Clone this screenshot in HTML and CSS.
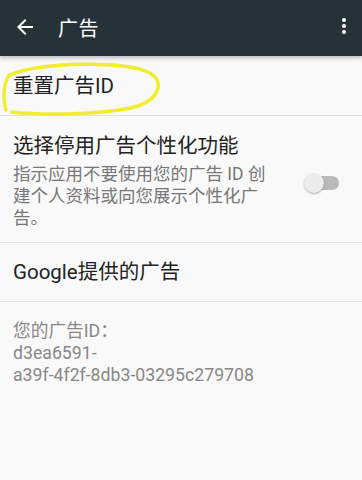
FILE: index.html
```html
<!DOCTYPE html>
<html lang="zh-CN">
<head>
<meta charset="utf-8">
<link rel="stylesheet" href="styles.css">
</head>
<body>
<div class="screen">
  <header class="toolbar">
    <svg class="back" width="24" height="24" viewBox="0 0 24 24"><path d="M20 11H7.83l5.59-5.59L12 4l-8 8 8 8 1.41-1.41L7.83 13H20v-2z" fill="#fff"/></svg>
    <span class="title">广告</span>
    <span class="spacer"></span>
    <svg class="more" width="8" height="20" viewBox="0 0 8 20"><circle cx="4" cy="4" r="2" fill="#fff"/><circle cx="4" cy="10" r="2" fill="#fff"/><circle cx="4" cy="16" r="2" fill="#fff"/></svg>
  </header>
  <main class="list">
    <div class="row row-single reset">
      <span class="row-title">重置广告ID</span>
      <svg class="scribble" width="170" height="62" viewBox="0 0 170 62"><path d="M10 16 C 40 3, 125 1, 150 14 C 164 23, 160 39, 138 47 C 110 55, 50 57, 12 53 M 9 16 C 3 27, 3 40, 6 51" fill="none" stroke="#f2ee2e" stroke-width="3.5" stroke-linecap="round"/></svg>
    </div>
    <div class="row row-switch">
      <div class="row-text">
        <div class="row-title">选择停用广告个性化功能</div>
        <div class="row-sub">指示应用不要使用您的广告 ID 创<br>建个人资料或向您展示个性化广<br>告。</div>
      </div>
      <div class="switch"><span class="track"></span><span class="thumb"></span></div>
    </div>
    <div class="row row-single">
      <span class="row-title">Google提供的广告</span>
    </div>
    <div class="info">您的广告ID：<br>d3ea6591-<br>a39f-4f2f-8db3-03295c279708</div>
  </main>
</div>
</body>
</html>
```
FILE: styles.css
```css
html, body {
  margin: 0;
  padding: 0;
}
body {
  background: #f9f9f9;
  font-family: Roboto, "Noto Sans CJK SC", sans-serif;
  width: 362px;
  height: 480px;
  overflow: hidden;
}
.screen {
  display: flex;
  flex-direction: column;
}
.toolbar {
  height: 56px;
  background: #263238;
  display: flex;
  align-items: center;
  padding: 0 12px 0 13px;
  box-shadow: 0 2px 4px rgba(0,0,0,0.25);
  position: relative;
  z-index: 1;
}
.back {
  margin-top: -2px;
}
.title {
  color: #fff;
  font-size: 20px;
  margin-left: 21px;
  margin-top: -2px;
  letter-spacing: 0.5px;
}
.spacer {
  flex: 1;
}
.more {
  margin-top: -4px;
  margin-right: 2px;
}
.list {
  display: flex;
  flex-direction: column;
}
.row {
  border-bottom: 1px solid #e2e2e2;
  padding: 0 13px;
}
.row-single {
  height: 58px;
  display: flex;
  align-items: center;
}
.reset {
  position: relative;
  height: 59px;
}
.row-title {
  font-size: 20.5px;
  color: #222;
  line-height: 28px;
}
.scribble {
  position: absolute;
  left: 0;
  top: 3px;
}
.row-switch {
  display: flex;
  align-items: center;
  padding-top: 16px;
  padding-bottom: 13px;
}
.row-text {
  flex: 1;
}
.row-sub {
  font-size: 17.5px;
  color: #777;
  line-height: 22px;
  margin-top: 3px;
}
.switch {
  position: relative;
  width: 36px;
  height: 24px;
  margin-right: 9px;
  margin-top: 4px;
}
.track {
  position: absolute;
  left: 4px;
  right: 1px;
  top: 5px;
  height: 14px;
  border-radius: 7px;
  background: #b9b9b9;
}
.thumb {
  position: absolute;
  left: 0;
  top: 2px;
  width: 20px;
  height: 20px;
  border-radius: 50%;
  background: #ececec;
  box-shadow: 0 1px 2px rgba(0,0,0,0.3);
}
.info {
  padding: 18px 13px;
  font-size: 17.7px;
  line-height: 22px;
  color: #888;
}
```
